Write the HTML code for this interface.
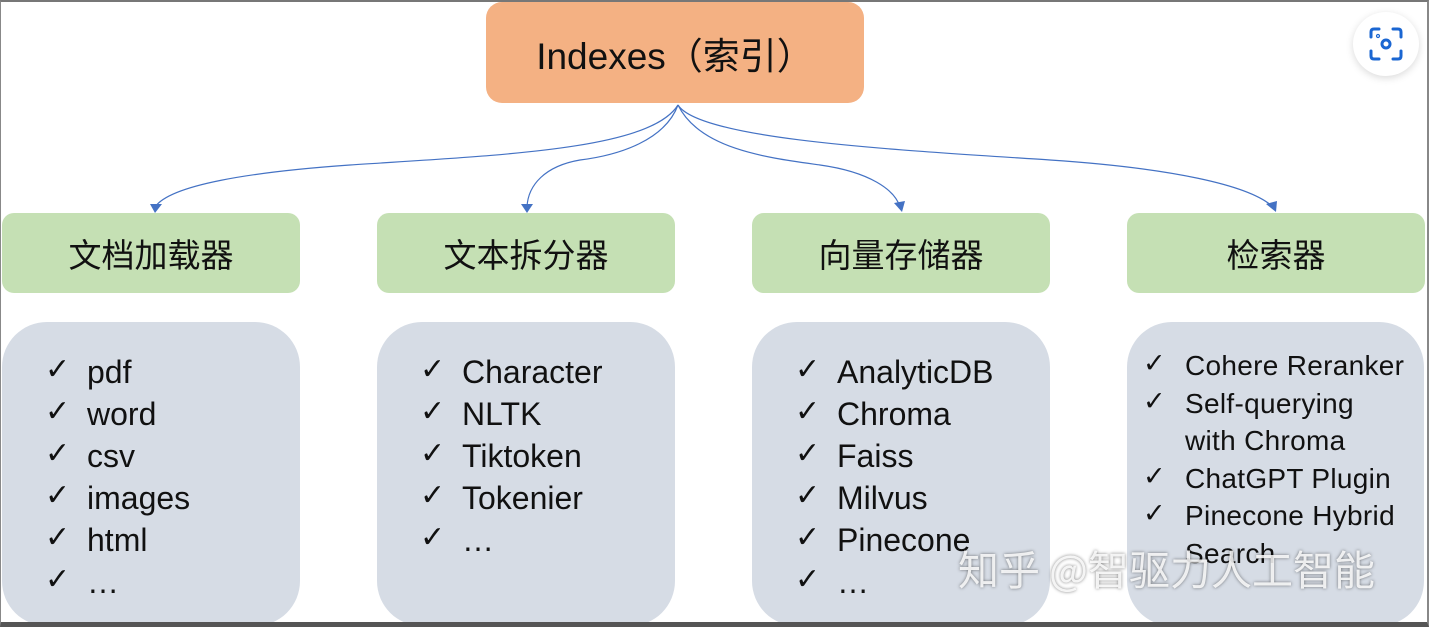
<!DOCTYPE html>
<html><head><meta charset="utf-8"><style>
body{margin:0;width:1431px;height:629px;background:#fff;position:relative;overflow:hidden;font-family:"Liberation Sans","Noto Sans CJK SC",sans-serif;color:#111}
.b{position:absolute;box-sizing:border-box}
.frame{left:0;top:0;width:1429px;height:627px;border-top:2px solid #777;border-left:1px solid #888;border-right:2px solid #888;border-bottom:5px solid #555;z-index:5}
.org{left:486px;top:2px;width:378px;height:101px;background:#f4b183;border-radius:16px;font-size:37px;display:flex;align-items:center;justify-content:center}
.g{top:213px;width:298px;height:80px;background:#c5e0b4;border-radius:12px;font-size:33px;display:flex;align-items:center;justify-content:center;font-family:"Noto Sans CJK SC",sans-serif}
.gr{top:322px;width:298px;height:304px;background:#d6dce5;border-radius:45px}
.it{position:absolute;font-size:32px;white-space:nowrap}
.it div{height:42px;line-height:42px;position:relative;padding-left:42px}
.it div b{position:absolute;left:0;top:0;font-size:30px;font-family:"DejaVu Sans",sans-serif;font-weight:bold;line-height:38px}
.it4{position:absolute;font-size:28px;white-space:nowrap;letter-spacing:.3px}
.it4 div{height:37.5px;line-height:37.5px;position:relative;padding-left:42px}
.it4 div b{position:absolute;left:0;top:0;font-size:27px;font-family:"DejaVu Sans",sans-serif;font-weight:bold;line-height:34px}
</style></head><body>
<div class="b frame"></div>
<div class="b org">Indexes（索引）</div>
<svg class="b" style="left:0;top:0" width="1431" height="629">
<g fill="none" stroke="#4472c4" stroke-width="1.2">
<path d="M678 105 C650 150 500 155 350 165 C250 172 170 185 155 207"/>
<path d="M678 105 C665 140 620 155 580 160 C545 166 528 185 527 207"/>
<path d="M678 105 C700 150 770 158 820 165 C870 172 895 190 900 207"/>
<path d="M678 105 C700 140 900 150 1050 160 C1170 168 1250 185 1273 207"/>
</g>
<g fill="#4472c4"><path d="M150 204 L162 204 L155 213Z"/><path d="M521 204 L533 204 L527 213Z"/><path d="M894 203 L905 201 L902 212Z"/><path d="M1266 204 L1277 201 L1276 212Z"/></g>
</svg>
<div class="b g" style="left:2px">文档加载器</div>
<div class="b g" style="left:377px">文本拆分器</div>
<div class="b g" style="left:752px">向量存储器</div>
<div class="b g" style="left:1127px">检索器</div>
<div class="b gr" style="left:2px"></div>
<div class="b gr" style="left:377px"></div>
<div class="b gr" style="left:752px"></div>
<div class="b gr" style="left:1127px;width:297px"></div>
<div class="it" style="left:45px;top:351px"><div><b>✓</b>pdf</div><div><b>✓</b>word</div><div><b>✓</b>csv</div><div><b>✓</b>images</div><div><b>✓</b>html</div><div><b>✓</b>…</div></div>
<div class="it" style="left:420px;top:351px"><div><b>✓</b>Character</div><div><b>✓</b>NLTK</div><div><b>✓</b>Tiktoken</div><div><b>✓</b>Tokenier</div><div><b>✓</b>…</div></div>
<div class="it" style="left:795px;top:351px"><div><b>✓</b>AnalyticDB</div><div><b>✓</b>Chroma</div><div><b>✓</b>Faiss</div><div><b>✓</b>Milvus</div><div><b>✓</b>Pinecone</div><div><b>✓</b>…</div></div>
<div class="it4" style="left:1143px;top:347px"><div><b>✓</b>Cohere Reranker</div><div><b>✓</b>Self-querying</div><div>with Chroma</div><div><b>✓</b>ChatGPT Plugin</div><div><b>✓</b>Pinecone Hybrid</div><div>Search</div></div>
<div class="b" style="left:958px;top:537px;font-size:41px;color:rgba(255,255,255,.85);text-shadow:0 0 3px rgba(0,0,0,.5);font-family:'Noto Sans CJK SC',sans-serif;white-space:nowrap">知乎 @智驱力人工智能</div>
<div class="b" style="left:1353px;top:12px;width:66px;height:64px;border-radius:50%;background:#fff;box-shadow:0 2px 8px rgba(0,0,0,.15)"></div>
<svg class="b" style="left:1369px;top:27px" width="34" height="34" viewBox="0 0 34 34" fill="none" stroke="#1a66d2" stroke-width="3" stroke-linecap="round">
<path d="M2 10V5Q2 2 5 2H10M24 2H29Q32 2 32 5V10M32 24V29Q32 32 29 32H24M10 32H5Q2 32 2 29V24"/>
<circle cx="17" cy="17" r="4"/><circle cx="9" cy="9" r=".6"/>
</svg>
</body></html>
